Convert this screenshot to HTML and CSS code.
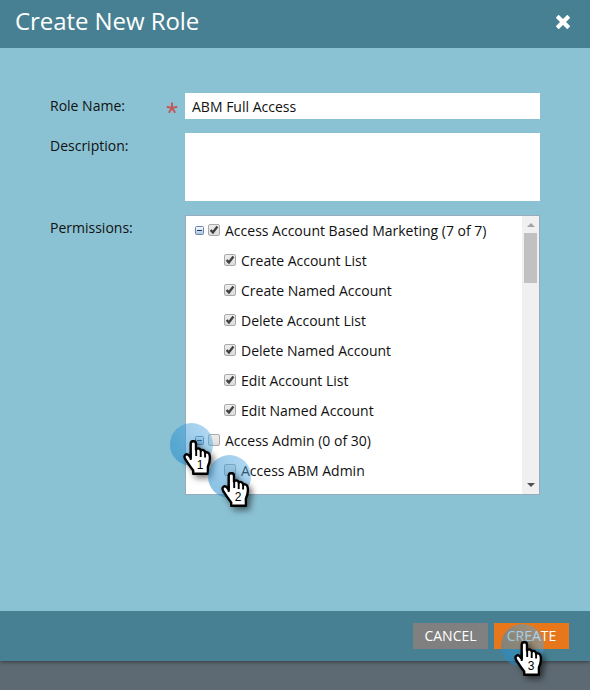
FILE: index.html
```html
<!DOCTYPE html>
<html lang="en">
<head>
<meta charset="utf-8">
<title>Create New Role</title>
<link rel="stylesheet" href="styles.css">
</head>
<body>
<svg class="defs" width="0" height="0" aria-hidden="true">
  <defs>
    <linearGradient id="boxfill" x1="0" y1="0" x2="0" y2="1"><stop offset="0" stop-color="#eeeeee"/><stop offset="1" stop-color="#dcdcdc"/></linearGradient>
    <linearGradient id="toggle-fill" x1="0" y1="0" x2="0" y2="1"><stop offset="0" stop-color="#ffffff"/><stop offset="1" stop-color="#a9c1dc"/></linearGradient>
    <symbol id="box" viewBox="0 0 12 12"><rect x=".5" y=".5" width="11" height="11" rx="1.5" fill="url(#boxfill)" stroke="#a9a9a9"/></symbol>
    <symbol id="checked" viewBox="0 0 12 12"><use href="#box"/><path d="M2.6 6 4.9 8.4 9.4 2.5" fill="none" stroke="#404040" stroke-width="2.4"/></symbol>
    <symbol id="minus" viewBox="0 0 9 9"><rect x=".5" y=".5" width="8" height="8" rx="1" fill="url(#toggle-fill)" stroke="#6684ad"/><path d="M2 4.5h5" stroke="#173b6b"/></symbol>
    <symbol id="hand" viewBox="0 0 30 36"><path d="M7.7 13V3.8C7.7 .3 13 .3 13 3.8V9.5C14 7.8 17.5 8.1 17.7 10.5C19 9.3 22 10 22.1 12.5C24 11.8 26.3 13 26.6 15C27.4 19 27.1 22 24.9 26.5V33.8H10.2V30.5C7 26.5 4.5 22.5 2.2 19C.1 15.6 3.5 12.7 6 15.5L7.7 17.8Z" fill="#fff" stroke="#000" stroke-width="2.4" stroke-linejoin="round"/><path d="M13.2 9V16M17.7 10.5V17M22.1 12.5V17.5M7.7 12V20" fill="none" stroke="#000" stroke-width="1.9"/></symbol>
  </defs>
</svg>
<div class="dialog">
  <header class="header">
    <h1>Create New Role</h1>
    <svg class="close" viewBox="0 0 14 14"><path d="M2.7 2.7 11.3 11.3M11.3 2.7 2.7 11.3" stroke="#fff" stroke-width="4.2" stroke-linecap="square"/></svg>
  </header>
  <main class="form">
    <div class="field">
      <span class="label">Role Name:</span><span class="required"><svg viewBox="0 0 12 12"><path d="M6 6V.5M6 6 .8 4.7M6 6 11.2 4.7M6 6 2.8 10.7M6 6 9.2 10.7" stroke="#c4595b" stroke-width="2"/></svg></span>
      <div class="input">ABM Full Access</div>
    </div>
    <div class="field">
      <span class="label">Description:</span><span class="required"></span>
      <div class="input area"></div>
    </div>
    <div class="field">
      <span class="label">Permissions:</span><span class="required"></span>
      <div class="tree">
        <div class="rows">
          <div class="row"><svg class="toggle"><use href="#minus"/></svg><svg class="check"><use href="#checked"/></svg>Access Account Based Marketing (7 of 7)</div>
          <div class="row child"><svg class="check"><use href="#checked"/></svg>Create Account List</div>
          <div class="row child"><svg class="check"><use href="#checked"/></svg>Create Named Account</div>
          <div class="row child"><svg class="check"><use href="#checked"/></svg>Delete Account List</div>
          <div class="row child"><svg class="check"><use href="#checked"/></svg>Delete Named Account</div>
          <div class="row child"><svg class="check"><use href="#checked"/></svg>Edit Account List</div>
          <div class="row child"><svg class="check"><use href="#checked"/></svg>Edit Named Account</div>
          <div class="row"><svg class="toggle"><use href="#minus"/></svg><svg class="check"><use href="#box"/></svg>Access Admin (0 of 30)</div>
          <div class="row child"><svg class="check"><use href="#box"/></svg>Access ABM Admin</div>
        </div>
        <div class="scrollbar">
          <svg class="arrow" viewBox="0 0 8 4"><path d="M0 4 4 0 8 4Z" fill="#a3a3a3"/></svg>
          <div class="thumb"></div>
          <svg class="arrow down" viewBox="0 0 8 4"><path d="M0 0H8L4 4Z" fill="#505050"/></svg>
        </div>
      </div>
    </div>
  </main>
  <footer class="footer">
    <div class="button">CANCEL</div>
    <div class="button primary">CREATE</div>
  </footer>
</div>
<div class="pointer first"><svg><use href="#hand"/></svg><span>1</span></div>
<div class="pointer second"><svg><use href="#hand"/></svg><span>2</span></div>
<div class="pointer third"><svg><use href="#hand"/></svg><span>3</span></div>
</body>
</html>
```
FILE: styles.css
```css
* { box-sizing: border-box; }
body {
  margin: 0;
  height: 690px;
  overflow: hidden;
  position: relative;
  background: #5e6a73;
  font: 14px/20px "Open Sans", sans-serif;
  color: #111;
}
svg { display: block; flex: none; }
.defs { position: absolute; }
.dialog {
  height: 661px;
  display: flex;
  flex-direction: column;
  box-shadow: 0 1px 4px rgba(0, 0, 0, .45);
}
.header {
  height: 48px;
  padding: 0 20px 5px 15px;
  display: flex;
  align-items: center;
  justify-content: space-between;
  background: #478092;
}
h1 { margin: 0 0 2px; font-size: 24px; font-weight: 400; line-height: 32px; letter-spacing: -.06px; color: #fff; }
.close { width: 14px; height: 14px; }
.form {
  flex: 1;
  padding: 45px 50px 0;
  display: flex;
  flex-direction: column;
  gap: 14px;
  background: #8ac1d3;
}
.field { display: flex; }
.label { width: 115px; padding-top: 3px; }
.required { width: 20px; padding: 9px 0 0 1px; }
.required svg { width: 12px; height: 12px; }
.input { width: 355px; height: 26px; padding: 4px 7px; background: #fff; }
.area { height: 68px; }
.tree {
  width: 355px;
  height: 280px;
  display: flex;
  background: #fff;
  border: 1px solid #9aaabd;
}
.rows { flex: 1; }
.row { height: 30px; padding-left: 9px; display: flex; align-items: center; white-space: nowrap; }
.child { padding-left: 38px; }
.toggle { width: 9px; height: 9px; margin: 0 4px 1px 0; }
.check { width: 12px; height: 12px; margin: 0 5px 2px 0; }
.scrollbar {
  width: 17px;
  padding: 7px 2px 7px;
  display: flex;
  flex-direction: column;
  align-items: center;
  background: #f0f0f0;
}
.arrow { width: 8px; height: 4px; }
.thumb { width: 13px; height: 50px; margin-top: 6px; background: #c1c1c1; }
.down { margin-top: auto; }
.footer {
  height: 50px;
  padding: 12px 21px 0;
  display: flex;
  justify-content: flex-end;
  gap: 6px;
  background: #478092;
}
.button { width: 75px; height: 26px; line-height: 26px; text-align: center; color: #fff; background: #808080; }
.primary { background: #e8761a; }
.pointer {
  position: absolute;
  width: 43px;
  height: 43px;
  border-radius: 50%;
  background: linear-gradient(60deg, rgba(30, 135, 200, .55), rgba(90, 175, 230, .45));
}
.pointer svg {
  position: absolute;
  left: 13px;
  top: 17px;
  width: 30px;
  height: 36px;
  filter: drop-shadow(3px 3px 3px rgba(0, 0, 0, .55));
}
.pointer span {
  position: absolute;
  left: 23px;
  top: 35px;
  width: 14px;
  text-align: center;
  font: 12px/14px "Liberation Sans", sans-serif;
  color: #000;
}
.first { left: 170px; top: 423px; }
.second { left: 208px; top: 455px; }
.third { left: 501px; top: 624px; }
```
